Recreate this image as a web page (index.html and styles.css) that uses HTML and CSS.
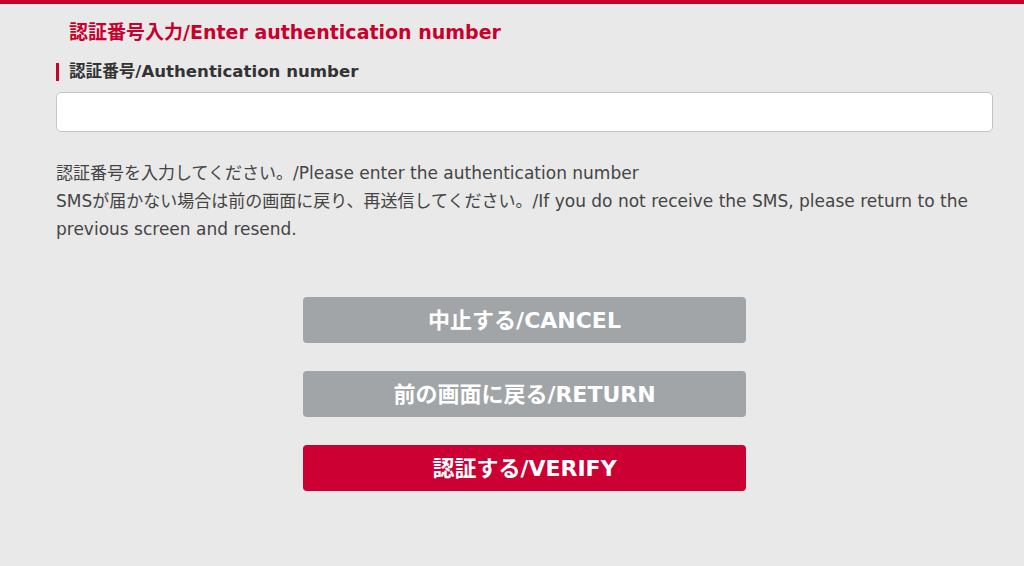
FILE: index.html
```html
<!DOCTYPE html>
<html lang="ja">
<head>
  <meta charset="UTF-8" />
  <meta name="viewport" content="width=device-width, initial-scale=1.0" />
  <title>認証番号入力</title>
  <link rel="stylesheet" href="styles.css">
</head>

<body>
  <div class="barra-superior"></div>

  <main class="contenido">
    <h1 class="titulo">認証番号入力/Enter authentication number</h1>

    <form class="form-auth" onsubmit="return false">
      <label class="etiqueta" for="codigo">認証番号/Authentication number</label>
      <input type="text" id="codigo" class="campo" />

      <p class="aviso">
        認証番号を入力してください。/Please enter the authentication number<br>
        SMSが届かない場合は前の画面に戻り、再送信してください。/If you do not receive the SMS, please return to the previous screen and resend.
      </p>

      <div class="botones">
        <button type="button" class="boton gris">中止する/CANCEL</button>
        <button type="button" class="boton gris">前の画面に戻る/RETURN</button>
        <button type="submit" class="boton rojo">認証する/VERIFY</button>
      </div>
    </form>
  </main>
</body>

</html>
```

FILE: styles.css
```css
body {
  margin: 0;
  background-color: #e9e9e9;
  font-family: "DejaVu Sans", "Noto Sans CJK JP", sans-serif;
  color: #444;
}

.barra-superior {
  height: 4px;
  background-color: #c8002d;
}

.contenido {
  padding: 0 31px 0 56px;
}

.titulo {
  margin: 0;
  padding: 16px 0 0 13px;
  font-size: 19px;
  line-height: 24px;
  font-weight: bold;
  color: #c8002d;
}

.form-auth {
  margin-top: 19px;
}

.etiqueta {
  display: block;
  padding-left: 10px;
  border-left: 3px solid #c8002d;
  font-size: 16.6px;
  line-height: 18px;
  font-weight: bold;
  color: #333;
}

.campo {
  display: block;
  width: 100%;
  height: 40px;
  margin-top: 11px;
  box-sizing: border-box;
  border: 1px solid #c4c4c4;
  border-radius: 5px;
  background-color: #fff;
}

.aviso {
  margin: 27px 0 0;
  font-size: 17px;
  line-height: 28px;
  color: #444;
}

.botones {
  display: flex;
  flex-direction: column;
  align-items: center;
  gap: 28px;
  margin-top: 54px;
}

.boton {
  width: 443px;
  height: 46px;
  padding: 0 0 5px;
  border: none;
  border-radius: 4px;
  color: #fff;
  font-family: inherit;
  font-size: 22px;
  font-weight: bold;
  cursor: pointer;
}

.gris {
  background-color: #a1a5a8;
}

.rojo {
  background-color: #cc0033;
}
```
